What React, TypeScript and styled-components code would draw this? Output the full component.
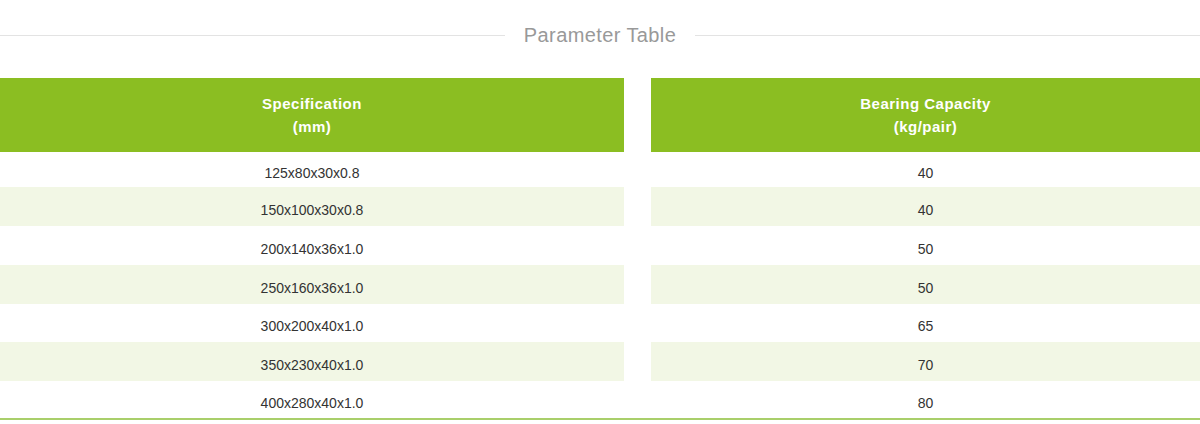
import React from "react";
import styled, { createGlobalStyle } from "styled-components";

const Global = createGlobalStyle`
  html, body { margin: 0; padding: 0; background: #fff; }
  body { font-family: "Liberation Sans", Arial, sans-serif; }
`;

const Page = styled.div`
  width: 1200px;
  height: 424px;
  overflow: hidden;
  background: #fff;
`;

const TitleBar = styled.div`
  display: flex;
  align-items: center;
  gap: 19px;
  height: 36px;
  padding-top: 17px;
  margin-bottom: 25px;
`;

const Rule = styled.div`
  flex: 1;
  height: 1px;
  background: #e3e3e3;
`;

const Title = styled.h2`
  margin: 0;
  font-weight: 400;
  font-size: 20px;
  line-height: 36px;
  color: #999;
  letter-spacing: 0.4px;
`;

const Table = styled.div`
  display: grid;
  grid-template-columns: 624px 549px;
  column-gap: 27px;
  border-bottom: 2px solid #a9cf6b;
`;

const HeadCell = styled.div`
  height: 74px;
  background: #8bbe22;
  color: #fff;
  font-weight: 700;
  font-size: 15px;
  line-height: 23px;
  display: flex;
  flex-direction: column;
  align-items: center;
  justify-content: center;
  text-align: center;
  letter-spacing: 0.5px;
`;

const Cell = styled.div<{ $striped: boolean; $h: number }>`
  height: ${(p) => p.$h}px;
  background: ${(p) => (p.$striped ? "#f2f7e5" : "#fff")};
  color: #333;
  font-size: 14px;
  display: flex;
  align-items: center;
  justify-content: center;
  padding-top: 6px;
  box-sizing: border-box;
`;

const rows: [string, string][] = [
  ["125x80x30x0.8", "40"],
  ["150x100x30x0.8", "40"],
  ["200x140x36x1.0", "50"],
  ["250x160x36x1.0", "50"],
  ["300x200x40x1.0", "65"],
  ["350x230x40x1.0", "70"],
  ["400x280x40x1.0", "80"],
];

const heights = [35, 39, 39, 39, 38, 39, 37];

export default function App() {
  return (
    <Page>
      <Global />
      <TitleBar>
        <Rule />
        <Title>Parameter Table</Title>
        <Rule />
      </TitleBar>
      <Table>
        <HeadCell>
          <span>Specification</span>
          <span>(mm)</span>
        </HeadCell>
        <HeadCell>
          <span>Bearing Capacity</span>
          <span>(kg/pair)</span>
        </HeadCell>
        {rows.map(([spec, cap], i) => (
          <React.Fragment key={spec}>
            <Cell $striped={i % 2 === 1} $h={heights[i]}>{spec}</Cell>
            <Cell $striped={i % 2 === 1} $h={heights[i]}>{cap}</Cell>
          </React.Fragment>
        ))}
      </Table>
    </Page>
  );
}
